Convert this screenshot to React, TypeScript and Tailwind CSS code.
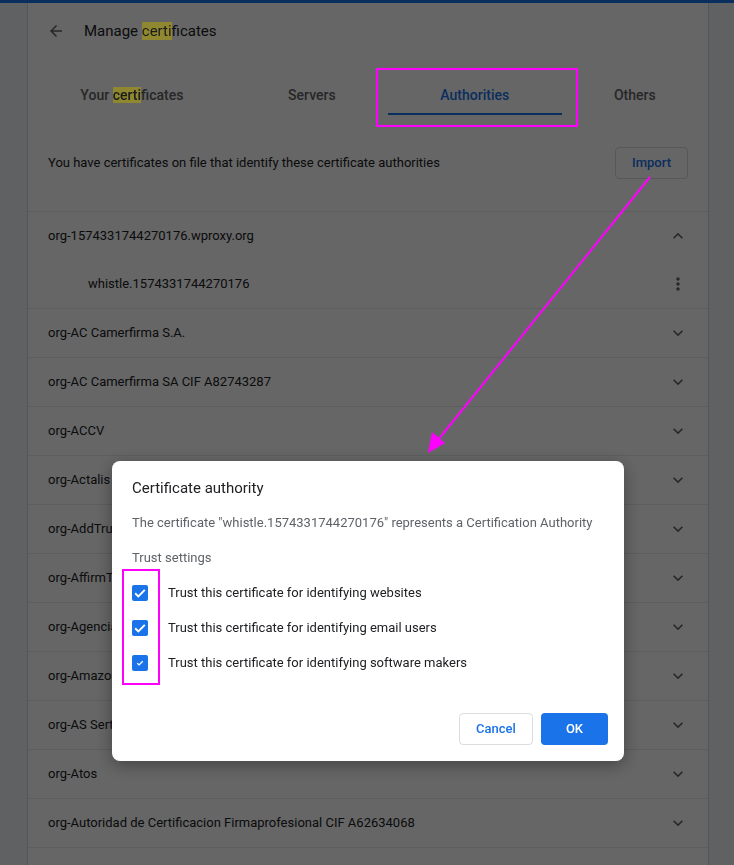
import React from 'react';

const rows = [
  'org-AC Camerfirma S.A.',
  'org-AC Camerfirma SA CIF A82743287',
  'org-ACCV',
  'org-Actalis S.p.A./03358520967',
  'org-AddTrust AB',
  'org-AffirmTrust',
  'org-Agencia Catalana de Certificacio (NIF Q-0801176-I)',
  'org-Amazon',
  'org-AS Sertifitseerimiskeskus',
  'org-Atos',
  'org-Autoridad de Certificacion Firmaprofesional CIF A62634068',
  'org-Buypass AS-983163327',
];

const tabs = ['Your certificates', 'Servers', 'Authorities', 'Others'];

const trust = [
  { label: 'Trust this certificate for identifying websites', small: false },
  { label: 'Trust this certificate for identifying email users', small: false },
  { label: 'Trust this certificate for identifying software makers', small: true },
];

const Icon = ({ d, size = 20 }: { d: string; size?: number }) => (
  <svg width={size} height={size} viewBox="0 0 24 24" className="fill-[#5f6368]">
    <path d={d} />
  </svg>
);

const ICON_BACK = 'M20 11H7.83l5.59-5.59L12 4l-8 8 8 8 1.41-1.41L7.83 13H20v-2z';
const ICON_MORE = 'M16.59 8.59L12 13.17 7.41 8.59 6 10l6 6 6-6z';
const ICON_LESS = 'M12 8l-6 6 1.41 1.41L12 10.83l4.59 4.58L18 14z';
const ICON_DOTS =
  'M12 8c1.1 0 2-.9 2-2s-.9-2-2-2-2 .9-2 2 .9 2 2 2zm0 2c-1.1 0-2 .9-2 2s.9 2 2 2 2-.9 2-2-.9-2-2-2zm0 6c-1.1 0-2 .9-2 2s.9 2 2 2 2-.9 2-2-.9-2-2-2z';

// search hit marks sit above the dim layer, as in the screenshot
const Hit = ({ children }: { children: React.ReactNode }) => (
  <span className="relative z-50 bg-[#8f8830] text-[#1b1b1b]">{children}</span>
);

const Check = ({ small }: { small: boolean }) => (
  <div className="w-4 h-4 rounded-[2px] bg-[#1a73e8] flex items-center justify-center">
    <svg width={small ? 8 : 14} height={small ? 8 : 14} viewBox="0 0 16 16" fill="none">
      <path d="M2.5 8.3l3.6 3.5L13.5 4.5" stroke="white" strokeWidth={small ? 2.6 : 2.2} />
    </svg>
  </div>
);

export default function App() {
  return (
    <div className="min-h-screen bg-[#f1f3f4] font-['Roboto','Liberation_Sans',sans-serif] text-[13px] text-[#202124]">
      <div className="h-[3px] bg-[#1a73e8]" />

      <div className="ml-[27px] w-[682px] bg-white border-x border-[#d4d4d4]">
        {/* header */}
        <div className="h-[56px] flex items-center">
          <div className="w-6 ml-[16px] flex justify-center">
            <Icon d={ICON_BACK} size={18} />
          </div>
          <h1 className="ml-[16px] text-[15px] text-[#202124]">
            Manage <Hit>certi</Hit>ficates
          </h1>
        </div>

        {/* tabs */}
        <div className="flex">
          {tabs.map((t) => {
            const active = t === 'Authorities';
            return (
              <div key={t} className="flex-auto flex flex-col items-center pt-[26px]">
                <span
                  className={`text-[14px] font-medium leading-5 ${active ? 'text-[#1a73e8]' : 'text-[#5f6368]'}`}
                >
                  {t === 'Your certificates' ? (
                    <>
                      Your <Hit>certi</Hit>ficates
                    </>
                  ) : (
                    t
                  )}
                </span>
                <div className={`mt-2 h-[2px] w-full ${active ? 'bg-[#1a73e8]' : ''}`} />
              </div>
            );
          })}
        </div>

        {/* description + import */}
        <div className="h-[96px] flex items-center justify-between px-5">
          <span>You have certificates on file that identify these certificate authorities</span>
          <button className="h-8 px-4 rounded border border-[#dadce0] text-[#1a73e8] font-medium">
            Import
          </button>
        </div>

        {/* list */}
        <div className="border-t border-[#e8eaed]">
          <div className="h-12 flex items-center justify-between pl-5 pr-5">
            <span>org-1574331744270176.wproxy.org</span>
            <Icon d={ICON_LESS} />
          </div>
          <div className="h-12 flex items-center justify-between pl-[60px] pr-5">
            <span>whistle.1574331744270176</span>
            <Icon d={ICON_DOTS} />
          </div>
          {rows.map((r) => (
            <div
              key={r}
              className="h-[49px] border-t border-[#e8eaed] flex items-center justify-between pl-5 pr-5"
            >
              <span>{r}</span>
              <Icon d={ICON_MORE} />
            </div>
          ))}
        </div>
      </div>

      {/* dim layer + dialog */}
      <div className="fixed inset-0 z-40 bg-black/60 flex justify-center items-start pt-[461px] pl-[2px]">
        <div className="w-[512px] h-[300px] bg-white rounded-lg shadow-[0_4px_18px_rgba(0,0,0,0.35)] pl-5 pr-4 pt-[15px] pb-4 flex flex-col">
          <h2 className="text-[15px] leading-6 text-[#202124]">Certificate authority</h2>
          <p className="mt-[13px] leading-5 text-[#5f6368]">
            The certificate "whistle.1574331744270176" represents a Certification Authority
          </p>
          <p className="mt-[15px] leading-5 text-[#5f6368]">Trust settings</p>
          <div className="mt-[7px]">
            {trust.map((t) => (
              <div key={t.label} className="h-[35px] flex items-center">
                <Check small={t.small} />
                <span className="ml-5">{t.label}</span>
              </div>
            ))}
          </div>
          <div className="mt-auto flex justify-end gap-2">
            <button className="h-8 w-[74px] rounded border border-[#dadce0] text-[#1a73e8] font-medium">
              Cancel
            </button>
            <button className="h-8 w-[67px] rounded bg-[#1a73e8] text-white font-medium">OK</button>
          </div>
        </div>
      </div>

      {/* annotation marks */}
      <svg className="fixed inset-0 z-[60] pointer-events-none" width="734" height="865">
        <rect x="377" y="69" width="200" height="57" fill="none" stroke="#ff00ff" strokeWidth="2" />
        <rect x="123" y="570" width="36" height="114" fill="none" stroke="#ff00ff" strokeWidth="2" />
        <line x1="650" y1="177" x2="438" y2="440" stroke="#ff00ff" strokeWidth="2" />
        <polygon points="428,453 432,432 445,443" fill="#ff00ff" />
      </svg>
    </div>
  );
}
